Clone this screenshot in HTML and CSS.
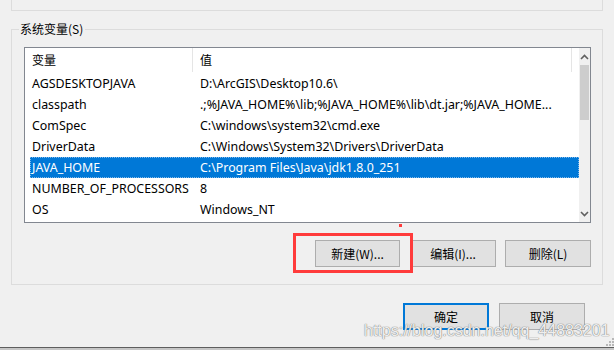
FILE: index.html
```html
<!DOCTYPE html>
<html lang="zh-CN">
<head>
<meta charset="utf-8">
<title>系统变量</title>
<link rel="stylesheet" href="styles.css">
</head>
<body>
<div class="dialog">
  <div class="prev-group"></div>
  <div class="group">
    <span class="group-title">系统变量(S)</span>
    <div class="list">
      <div class="list-main">
        <div class="list-head">
          <div class="hcell c1">变量</div>
          <div class="hcell c2">值</div>
          <div class="hcell c3"></div>
        </div>
        <div class="rows">
          <div class="row"><span class="c1">AGSDESKTOPJAVA</span><span class="c2">D:\ArcGIS\Desktop10.6\</span></div>
          <div class="row"><span class="c1">classpath</span><span class="c2">.;%JAVA_HOME%\lib;%JAVA_HOME%\lib\dt.jar;%JAVA_HOME...</span></div>
          <div class="row"><span class="c1">ComSpec</span><span class="c2">C:\windows\system32\cmd.exe</span></div>
          <div class="row"><span class="c1">DriverData</span><span class="c2">C:\Windows\System32\Drivers\DriverData</span></div>
          <div class="row selected"><span class="c1">JAVA_HOME</span><span class="c2">C:\Program Files\Java\jdk1.8.0_251</span></div>
          <div class="row"><span class="c1">NUMBER_OF_PROCESSORS</span><span class="c2">8</span></div>
          <div class="row"><span class="c1">OS</span><span class="c2">Windows_NT</span></div>
        </div>
      </div>
      <div class="scrollbar">
        <div class="sb-btn"><svg width="9" height="6" viewBox="0 0 9 6"><path d="M1 5 L4.5 1.5 L8 5" fill="none" stroke="#606060" stroke-width="1.6"/></svg></div>
        <div class="sb-thumb"></div>
        <div class="sb-track"></div>
        <div class="sb-btn"><svg width="9" height="6" viewBox="0 0 9 6"><path d="M1 1 L4.5 4.5 L8 1" fill="none" stroke="#606060" stroke-width="1.6"/></svg></div>
      </div>
    </div>
    <div class="list-actions">
      <div class="marked">
        <span class="mark-dot"></span>
        <span class="mark-box"></span>
        <button class="btn">新建(W)...</button>
      </div>
      <button class="btn btn-edit">编辑(I)...</button>
      <button class="btn btn-del">删除(L)</button>
    </div>
  </div>
  <div class="dialog-actions">
    <button class="btn btn-default">确定</button>
    <button class="btn btn-cancel">取消</button>
  </div>
  <div class="watermark">https://blog.csdn.net/qq_44883201</div>
  <svg class="grip" width="8" height="8" viewBox="0 0 8 8">
    <rect x="6" y="0" width="2" height="2" fill="#b8b8b8"/>
    <rect x="3" y="3" width="2" height="2" fill="#b8b8b8"/>
    <rect x="6" y="3" width="2" height="2" fill="#b8b8b8"/>
    <rect x="0" y="6" width="2" height="2" fill="#b8b8b8"/>
    <rect x="3" y="6" width="2" height="2" fill="#b8b8b8"/>
    <rect x="6" y="6" width="2" height="2" fill="#b8b8b8"/>
  </svg>
  <div class="taskbar"></div>
</div>
</body>
</html>
```

FILE: styles.css
```css
* { box-sizing: border-box; }
html, body { margin: 0; padding: 0; }
body {
  background: #f0f0f0;
  width: 614px;
  height: 350px;
  overflow: hidden;
  font-family: "Noto Sans", "Noto Sans CJK SC", sans-serif;
  font-size: 12px;
  color: #000;
}
.dialog {
  position: relative;
  width: 614px;
  height: 350px;
  display: flex;
  flex-direction: column;
}
.prev-group {
  margin-left: 11px;
  width: 592px;
  height: 11px;
  border: 1px solid #dcdcdc;
  border-top: none;
}
.group {
  position: relative;
  margin-top: 18px;
  margin-left: 11px;
  width: 592px;
  height: 256px;
  border: 1px solid #dcdcdc;
  padding: 17px 11px 0 12px;
}
.group-title {
  position: absolute;
  left: 7px;
  top: -10px;
  padding: 0 2px 0 1px;
  background: #f0f0f0;
  line-height: 18px;
  font-family: "Noto Sans CJK SC", sans-serif;
}
.list {
  width: 567px;
  height: 176px;
  border: 1px solid #828790;
  background: #fff;
  display: flex;
}
.list-main {
  flex: 1;
  display: flex;
  flex-direction: column;
}
.list-head {
  display: flex;
  height: 25px;
}
.hcell {
  height: 24px;
  line-height: 24px;
  padding-left: 7px;
  border-right: 1px solid #e5e5e5;
  font-family: "Noto Sans CJK SC", sans-serif;
}
.hcell.c1 { width: 168px; }
.hcell.c2 { width: 379px; }
.hcell.c3 { flex: 1; border-right: none; }
.rows {
  display: flex;
  flex-direction: column;
  padding-left: 5px;
}
.row {
  display: flex;
  height: 21px;
  line-height: 21px;
  white-space: nowrap;
  font-size: 12.4px;
}
.row .c1 { width: 168px; padding-left: 2px; overflow: hidden; }
.row .c2 { flex: 1; padding-left: 2px; overflow: hidden; }
.row.selected {
  background: #0078d7;
  color: #fff;
  outline: 1px dotted #7fb8ea;
  outline-offset: -1px;
}
.scrollbar {
  width: 17px;
  display: flex;
  flex-direction: column;
  background: #f0f0f0;
}
.sb-btn {
  height: 17px;
  display: flex;
  align-items: center;
  justify-content: center;
}
.sb-thumb {
  height: 55px;
  margin: 0 1px;
  background: #cdcdcd;
}
.sb-track { flex: 1; }
.list-actions {
  display: flex;
  justify-content: flex-end;
  gap: 9px;
  margin-top: 17px;
}
.btn {
  width: 86px;
  height: 27px;
  background: #e1e1e1;
  border: 1px solid #adadad;
  font-family: "Noto Sans CJK SC", sans-serif;
  font-size: 12px;
  line-height: 14px;
  color: #000;
  padding: 0;
  margin: 0;
}
.marked {
  position: relative;
}
.marked .btn { display: block; width: 85px; }
.list-actions > .marked { margin-right: 1px; }
.mark-box {
  position: absolute;
  left: -22px;
  right: -13px;
  top: -7px;
  bottom: -6px;
  border: 3px solid #ff3b3b;
}
.mark-dot {
  position: absolute;
  left: 84px;
  top: -16px;
  width: 3px;
  height: 3px;
  background: #ff3b3b;
}
.dialog-actions {
  display: flex;
  justify-content: flex-end;
  gap: 10px;
  margin-top: 18px;
  padding-right: 29px;
}
.btn-default {
  border: 2px solid #0078d7;
}
.watermark {
  position: absolute;
  left: 364px;
  top: 323px;
  font-family: "Liberation Sans", Arial, sans-serif;
  font-size: 16px;
  line-height: 16px;
  color: rgba(255, 255, 255, 0.9);
  text-shadow: 0 0 1px #7a7a7a, 0 0 1px #7a7a7a;
  white-space: nowrap;
}
.grip {
  position: absolute;
  left: 606px;
  top: 338px;
}
.taskbar {
  margin-top: auto;
  height: 3px;
  border-top: 1px solid #5e5e5e;
  background: #c6c6c6;
}
```
